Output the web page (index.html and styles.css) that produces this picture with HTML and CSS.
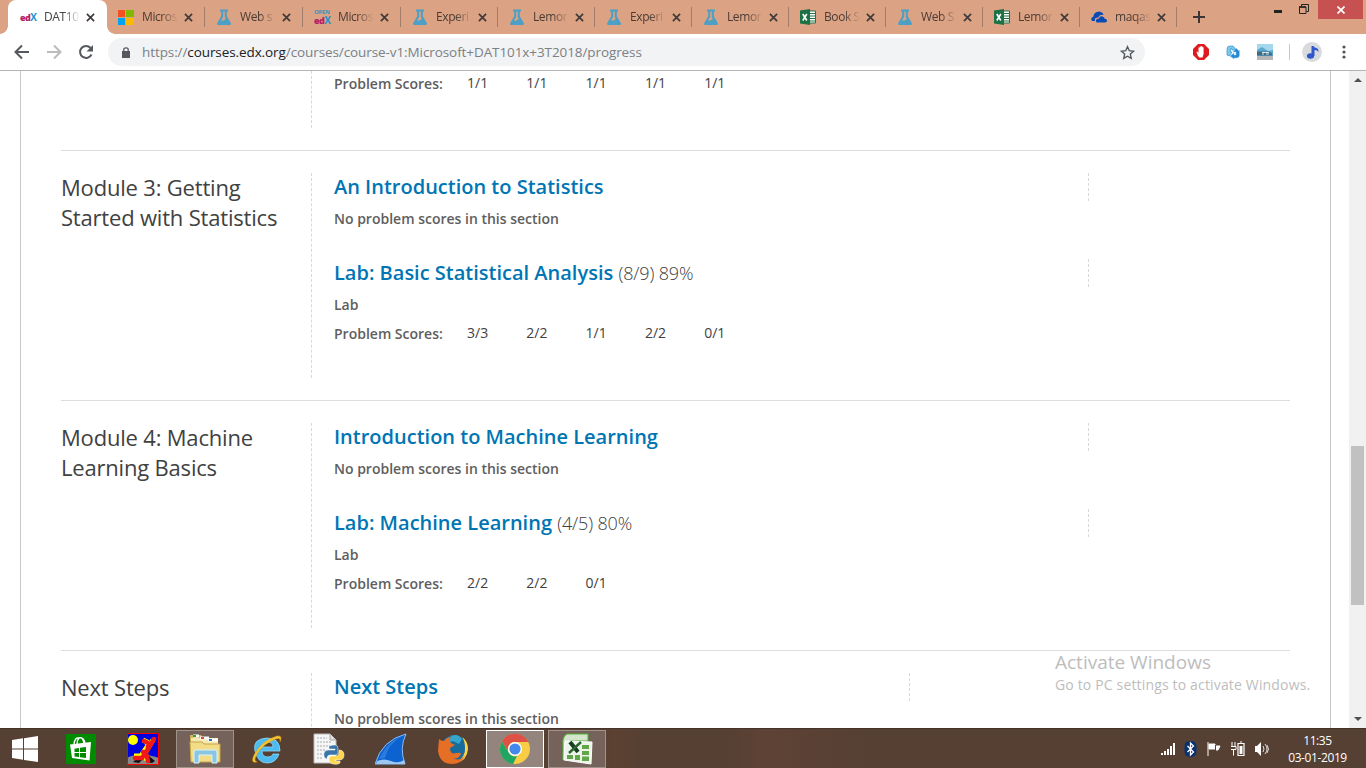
FILE: index.html
```html
<!DOCTYPE html>
<html lang="en">
<head>
<meta charset="utf-8">
<title>DAT101x Progress</title>
<link rel="stylesheet" href="styles.css">
</head>
<body>
<svg class="defs" aria-hidden="true">
  <symbol id="flask" viewBox="0 0 16 16"><path d="M4 .5h8v2h-1.200v4.700l4 6.800q.8 2-1 2H2.200q-1.800 0-1-2l4-6.800V2.500H4zM7.200 2.500V8L4.900 11.500h2.600l2.200-1.500-.9-2V2.500z" fill="#4c9fc5" fill-rule="evenodd"/></symbol>
  <symbol id="excel" viewBox="0 0 16 16"><path d="M8 2h7.500v12H8z" fill="#fff" stroke="#217346"/><path d="M10 4.500h5M10 7h5M10 9.500h5M10 12h5" stroke="#217346" stroke-width="1.200"/><path d="M0 1.500 10 0v16L0 14.500z" fill="#1d7145"/><path d="m2.800 5 4 6.500m0-6.500-4 6.500" stroke="#fff" stroke-width="1.600"/></symbol>
  <symbol id="close" viewBox="0 0 10 10"><path d="m1 1 8 8M9 1 1 9" stroke="#403b3a" stroke-width="1.900"/></symbol>
</svg>

<header class="tabs">
  <div class="tab active"><span class="edx"><b>ed</b><i>X</i></span><span class="label">DAT10</span><svg class="x"><use href="#close"/></svg></div>
  <div class="tab second"><svg class="fav" viewBox="0 0 16 16"><path d="M0 1h7v7H0z" fill="#f35022"/><path d="M8 1h8v7H8z" fill="#7fb900"/><path d="M0 9h7v7H0z" fill="#00a3ee"/><path d="M8 9h8v7H8z" fill="#ffb800"/></svg><span class="label">Micros</span><svg class="x"><use href="#close"/></svg></div>
  <div class="tab wide"><svg class="fav"><use href="#flask"/></svg><span class="label">Web s</span><svg class="x"><use href="#close"/></svg></div>
  <div class="tab wide"><span class="edx open"><small>OPEN</small><span><b>ed</b><i>X</i></span></span><span class="label">Micros</span><svg class="x"><use href="#close"/></svg></div>
  <div class="tab"><svg class="fav"><use href="#flask"/></svg><span class="label">Experi</span><svg class="x"><use href="#close"/></svg></div>
  <div class="tab"><svg class="fav"><use href="#flask"/></svg><span class="label">Lemor</span><svg class="x"><use href="#close"/></svg></div>
  <div class="tab"><svg class="fav"><use href="#flask"/></svg><span class="label">Experi</span><svg class="x"><use href="#close"/></svg></div>
  <div class="tab"><svg class="fav"><use href="#flask"/></svg><span class="label">Lemor</span><svg class="x"><use href="#close"/></svg></div>
  <div class="tab"><svg class="fav"><use href="#excel"/></svg><span class="label">Book S</span><svg class="x"><use href="#close"/></svg></div>
  <div class="tab"><svg class="fav"><use href="#flask"/></svg><span class="label">Web S</span><svg class="x"><use href="#close"/></svg></div>
  <div class="tab"><svg class="fav"><use href="#excel"/></svg><span class="label">Lemor</span><svg class="x"><use href="#close"/></svg></div>
  <div class="tab"><svg class="fav" viewBox="0 0 16 16"><path d="M1 12Q-1 9 2.500 7.500 2.500 4 6 3q3-1.500 5.500 1 1 1 .8 2-4-1-5 2.500Q3 8.500 4 12z" fill="#0a4ab3"/><path d="M5.500 13.500q-2-3.500 2.500-4 1-3 4-1.800 1.500.6 1.600 2 2.400.2 2.400 2 0 1.800-2 1.800z" fill="#0a4ab3"/></svg><span class="label">maqas</span><svg class="x"><use href="#close"/></svg></div>
  <svg class="plus" viewBox="0 0 12 12"><path d="M6 0v12M0 6h12" stroke="#3b3533" stroke-width="2"/></svg>
  <div class="window">
    <svg viewBox="0 0 8 3" width="8" height="3"><path d="M0 0h8v3H0z" fill="#222"/></svg>
    <svg class="restore" viewBox="0 0 10 10" width="10" height="10"><path d="M.5 3h6.500v6.500H.5zM2.500 2.500V.5h7v7H7.500" fill="none" stroke="#222"/><path d="M0 3h7" stroke="#222" stroke-width="1.500"/></svg>
    <span class="shut"><svg viewBox="0 0 8 8" width="8" height="8"><path d="m.5.5 7 7m0-7-7 7" stroke="#fff" stroke-width="1.700"/></svg></span>
  </div>
</header>

<nav class="toolbar">
  <svg class="back" viewBox="0 0 16 16"><path d="M15 8H2M8 1.500 1.500 8 8 14.500" fill="none" stroke="#55585c" stroke-width="2"/></svg>
  <svg class="forward" viewBox="0 0 16 16"><path d="M1 8h13M8 1.500 14.500 8 8 14.500" fill="none" stroke="#b9bbbd" stroke-width="2"/></svg>
  <svg class="reload" viewBox="0 0 16 16"><path d="M13.500 10.500A6 6 0 1 1 12.600 4" fill="none" stroke="#55585c" stroke-width="2"/><path d="M15 1v6.500H8.500z" fill="#55585c"/></svg>
  <div class="address">
    <svg class="lock" viewBox="0 0 8 11"><path d="M0 4h8v7H0z" fill="#55585c"/><path d="M1.800 4V2.500Q1.800.8 4 .8t2.200 1.700V4" fill="none" stroke="#55585c" stroke-width="1.300"/></svg>
    <span class="url">https://<b>courses.edx.org</b>/courses/course-v1:Microsoft+DAT101x+3T2018/progress</span>
    <svg class="star" viewBox="0 0 16 16"><path d="m8 1.800 1.900 4.300 4.600.5-3.500 3.100 1 4.600L8 12l-4 2.300 1-4.600-3.500-3.100 4.600-.5z" fill="none" stroke="#55585c" stroke-width="1.500"/></svg>
  </div>
  <div class="extensions">
    <svg viewBox="0 0 16 16"><path d="M5 0h6l5 5v6l-5 5H5l-5-5V5z" fill="#e01b20"/><path d="M5 12 3.500 8l1-.5L5.500 9V3.500h1.300V2.500h1.300v-.3h1.300v1h1.200V10L9.500 13.500h-3z" fill="#fff"/></svg>
    <svg viewBox="0 0 16 16"><path d="M2 11V5q0-3 3-3h3q2 1 2 4H7q0-2-1.500-1.500V8H7l-2.500 4z" fill="#7cc9ee" stroke="#388fc4" stroke-width=".7"/><path d="M14.500 6v5q0 3-3 3H9v1l-4-3 4-3v2h2V8H8l3-4 4 4" fill="#2786d2" stroke="#91d3f5" stroke-width=".6"/></svg>
    <svg viewBox="0 0 16 16"><path d="M0 0h16v16H0z" fill="#a5d8ed"/><path d="m0 6 5-3 6 4 5-1v6H0z" fill="#58a9cd"/><path d="M0 7.500h12l3 2v2H0z" fill="#426b83"/><path d="M5 8.500h7M5 10h2m2 0h3" stroke="#d6e6ed"/><path d="M0 12h16v4H0z" fill="#b5b6b5"/></svg>
    <i></i>
    <svg class="avatar" viewBox="0 0 20 20"><circle cx="10" cy="10" r="10" fill="#d9dadd"/><path d="M9.500 14V4h2q1 2 3 2 2 .5 2 4-1-2-4-2v6" fill="#3157cc"/><ellipse cx="8.500" cy="14" rx="3.600" ry="2.700" fill="#3157cc"/></svg>
    <svg class="dots" viewBox="0 0 4 14"><circle cx="2" cy="2" r="1.600"/><circle cx="2" cy="7" r="1.600"/><circle cx="2" cy="12" r="1.600"/></svg>
  </div>
</nav>

<main class="viewport">
  <div class="course">
    <section class="chapter partial">
      <h2></h2>
      <div class="lessons"><dl><dt>Problem Scores:</dt><dd>1/1</dd><dd>1/1</dd><dd>1/1</dd><dd>1/1</dd><dd>1/1</dd></dl></div>
    </section>
    <section class="chapter">
      <h2>Module 3: Getting<br>Started with Statistics</h2>
      <div class="lessons">
        <article><h3><a>An Introduction to Statistics</a></h3><p>No problem scores in this section</p></article>
        <article><h3><a>Lab: Basic Statistical Analysis</a> <span>(8/9) 89%</span></h3><p>Lab</p>
          <dl><dt>Problem Scores:</dt><dd>3/3</dd><dd>2/2</dd><dd>1/1</dd><dd>2/2</dd><dd>0/1</dd></dl></article>
      </div>
    </section>
    <section class="chapter">
      <h2>Module 4: Machine<br>Learning Basics</h2>
      <div class="lessons">
        <article><h3><a>Introduction to Machine Learning</a></h3><p>No problem scores in this section</p></article>
        <article><h3><a>Lab: Machine Learning</a> <span>(4/5) 80%</span></h3><p>Lab</p>
          <dl><dt>Problem Scores:</dt><dd>2/2</dd><dd>2/2</dd><dd>0/1</dd></dl></article>
      </div>
    </section>
    <section class="chapter">
      <h2>Next Steps</h2>
      <div class="lessons"><article class="short"><h3><a>Next Steps</a></h3><p>No problem scores in this section</p></article></div>
    </section>
  </div>
  <div class="scrollbar">
    <svg viewBox="0 0 8 4"><path d="M0 4 4 0l4 4z"/></svg>
    <span></span>
    <svg viewBox="0 0 8 4"><path d="m0 0 4 4 4-4z"/></svg>
  </div>
</main>

<aside class="watermark"><div>Activate Windows</div><p>Go to PC settings to activate Windows.</p></aside>

<footer class="taskbar">
  <div class="app start"><svg viewBox="0 0 26 26" width="26" height="26"><path d="M0 4 11 2.300V12.500H0zM12 2.200 26 0v12.500H12zM0 13.500h11v10.200L0 22zM12 13.500h14V26l-14-2.100z" fill="#fff"/></svg></div>
  <div class="app store"><svg viewBox="0 0 30 30" width="30" height="30"><path d="M0 0h30v30H0z" fill="#008a00"/><path d="m4 10.500 21-2.500-1.500 18.500L6 24z" fill="#fff"/><path d="M8 10q1-7 5-6 4-2 5 6m-7 0q0-4 2-6 5-1 6 5" fill="none" stroke="#fff" stroke-width="1.400"/><path d="M8.500 14.800 13 14v4H8.500zm5.500-1 6-.8v5h-6zM8.500 19H13v4l-4.500-.5zm5.500 0h6v5l-6-.8z" fill="#008a00"/></svg></div>
  <div class="app"><svg viewBox="0 0 32 32" width="32" height="32"><path d="M0 0h32v32H0z" fill="#0000e0"/><path d="M0 25q12-7 32 0v7H0z" fill="#888"/><path d="m6 29 8-7 3 3-5 5zm13 0 3-6 6 5-3 2z" fill="#111"/><circle cx="6" cy="7" r="5" fill="#ff0"/><path d="m16 7 4 2 1 6 5-8m-6 7-6 9H7m8-4 5 8" fill="none" stroke="#ff0" stroke-width="5"/><path d="m17 8 4 2v6l6-10m-6 10-6 9H8m8-6 3 1 2 8" fill="none" stroke="#f31818" stroke-width="4.500" stroke-linecap="round" stroke-linejoin="round"/><path d="M.5.500h31v31H.5z" fill="none" stroke="red"/></svg></div>
  <div class="app open-app"><svg viewBox="0 0 32 32" width="32" height="32"><path d="M1 2h11l2 3h13l1 23H2z" fill="#d7b75b"/><path d="M2 5h27v20H2z" fill="#f4e8ae"/><path d="M4 3h6M11 5h9M19 7h10" stroke="#fff" stroke-width="3"/><path d="M4 3h3" stroke="#27a63b" stroke-width="2"/><path d="M12 5h3" stroke="#dc4939" stroke-width="2"/><path d="M20 7h3" stroke="#2676c5" stroke-width="2"/><path d="M1 9h12l2 2h16v18H2z" fill="#f2dc87" stroke="#c8a347"/><path d="M5 30V19q0-2 2-2h19q2 0 2 2v11h-5v-8H10v8z" fill="#8ac6e1" stroke="#d7f4fd"/></svg></div>
  <div class="app"><svg viewBox="0 0 32 32" width="32" height="32"><path d="M29 18H11q0 6 6 6 4 0 5-3h6q-3 9-12 9T4 18 16 5q13 0 13 13M11 14h11q0-5-5.500-5T11 14" fill="#4dbbf0" stroke="#8bd9fb" stroke-width=".8" fill-rule="evenodd"/><path d="M6 29Q-1 31 3 22 11 7 26 3q6-1 3 6 1-5-4-3Q13 10 6 21q-4 7 0 8" fill="#f6c52f" stroke="#d89b16" stroke-width=".5"/></svg></div>
  <div class="app"><svg viewBox="0 0 32 32" width="32" height="32"><path d="M1 1h16l6 6v23H1z" fill="#f6f6f6" stroke="#bbb"/><path d="M17 1v6h6" fill="#ddd" stroke="#aaa"/><path d="M4 5h10M4 9h15M4 13h13M4 17h8M4 21h6M4 25h6" stroke="#aaa" stroke-dasharray="2 1"/><path d="M16 13q9-3 9 2v5q0 2-3 2h-5q-3 0-3 4-4-1-3-6 1-3 4-3h7v-1h-6z" fill="#3977aa" stroke="#fff" stroke-width=".5"/><path d="M26 17q5 0 5 5 0 5-5 5h-4v1h5v2q-2 2-7 1-4-1-4-4v-2q0-2 3-2h4q3 0 3-4z" fill="#ffd64c" stroke="#fff" stroke-width=".5"/></svg></div>
  <div class="app"><svg viewBox="0 0 32 32" width="32" height="32"><path d="M0 31Q7 7 31 1q-7 14-1 30z" fill="#0c62cf" stroke="#8bbcf3"/><path d="M2 28q7-3 14 0t13-1l1 4H1z" fill="#9bc7f2"/><path d="M4 26Q12 9 27 3q-14 8-17 22z" fill="#2b7ce0"/></svg></div>
  <div class="app"><svg viewBox="0 0 32 32" width="32" height="32"><circle cx="17" cy="15" r="13" fill="#176c9d"/><path d="M14 3q7-3 11 3l-3 5-6-3-5 2z" fill="#36a5cb"/><path d="M25 4q6 4 6 12-1 12-12 14 10-7 9-15 0-7-3-11" fill="#ffd34a"/><path d="M2 6q2 2 5 2 3-4 7-4-3 3 0 6l4 2-5 3q0 7 6 5 5-1 5 1-3 6-9 4 8 4 13-3-3 9-13 9Q3 31 1 18z" fill="#e66e25"/></svg></div>
  <div class="app open-app chrome"><svg viewBox="0 0 32 32" width="32" height="32"><circle cx="16" cy="16" r="15" fill="#f8cc45"/><path d="M3 8.500A15 15 0 0 1 29.500 9H16a7 7 0 0 0-6.500 10z" fill="#df5146"/><path d="M3 8.500 10 20a7 7 0 0 0 8 3l-4 8A15 15 0 0 1 3 8.500" fill="#21a565"/><circle cx="16" cy="16" r="7" fill="#fff"/><circle cx="16" cy="16" r="5.600" fill="#4388ed"/></svg></div>
  <div class="app open-app"><svg viewBox="0 0 32 32" width="32" height="32"><path d="M6 1h21v7H9v18l-7 1V7q1-5 4-6z" fill="#d4e4cd" stroke="#4fb52f"/><path d="m4 8 27 1-1 22-27-4z" fill="#edf5e9" stroke="#fff"/><path d="M21 12h7v4h-7zm0 6h7v4h-7zM6 22h6v4H6zm8 0h5v5h-5zm7 1.500h7V28h-7z" fill="#62a64b"/><path d="m9 9 8 10" stroke="#173e20" stroke-width="4"/><path d="M20 9 8 20" stroke="#2c652f" stroke-width="2.500"/></svg></div>
  <div class="tray">
    <svg viewBox="0 0 16 12"><path d="M1 10h2v2H1zm3-2h2v4H4zm3-2h2v6H7zm3-3h2v9h-2zm3-3h2v12h-2z" fill="#fff"/></svg>
    <svg class="bt" viewBox="0 0 12 16"><rect width="12" height="16" rx="5" fill="#0a326d"/><path d="m3 5 6 6-3 3V2l3 3-6 6" fill="none" stroke="#fff" stroke-width="1.300"/></svg>
    <svg class="flag" viewBox="0 0 16 16"><path d="M2 1v14M3 3h6v5H3zM10 5h4l-2 4h-2z" fill="#fff" stroke="#fff"/><path d="M9.500 4v5" stroke="#554035"/></svg>
    <svg class="battery" viewBox="0 0 16 16"><path d="M2 1v4m3-4v4M1 5.500h5v3H1m2.500 0v6" stroke="#fff" fill="none"/><path d="M8 2.500h6v12H8zM10 1h2" fill="none" stroke="#fff" stroke-width="1.200"/><path d="M9.500 5h3v8h-3z" fill="#fff"/></svg>
    <svg class="sound" viewBox="0 0 16 16"><path d="M1 5h2l4-4v14l-4-4H1z" fill="#fff"/><path d="M9 5q2 3 0 6m2-8q4 5 0 10m2-9q3 4 0 8" fill="none" stroke="#ddd"/></svg>
    <div class="clock"><div>11:35</div><div class="date">03-01-2019</div></div>
  </div>
</footer>
</body>
</html>
```

FILE: styles.css
```css
* { box-sizing: border-box; }
html, body { margin: 0; width: 1366px; height: 768px; overflow: hidden; }
body { display: flex; flex-direction: column; background: #fff; font-family: "Open Sans", "Noto Sans", sans-serif; }
h2, h3, p, dl, dd { margin: 0; }
svg { display: block; flex: none; }
.defs { position: absolute; width: 0; height: 0; }

.tabs { display: flex; flex: none; height: 34px; padding-left: 8px; background: #dba283; }
.tab { display: flex; align-items: center; flex: none; width: 97px; padding-left: 12px; position: relative; font-size: 12px; color: #4b3c36; }
.tab.wide { width: 98px; }
.tab.second { padding-left: 11px; }
.tab:not(.active)::after { content: ""; position: absolute; right: -1px; top: 7px; width: 1px; height: 20px; background: #a27d6b; }
.tab.active { width: 99px; background: #fff; border-radius: 8px 8px 0 0; color: #444; }
.tab.active::before, .tab.active::after { content: ""; position: absolute; bottom: 0; width: 8px; height: 8px; }
.tab.active::before { left: -8px; background: radial-gradient(circle at 0 0, transparent 7.5px, #fff 8px); }
.tab.active::after { right: -8px; background: radial-gradient(circle at 100% 0, transparent 7.5px, #fff 8px); }
.fav { width: 16px; height: 16px; }
.label { width: 36px; margin-left: 8px; white-space: nowrap; letter-spacing: -.4px; line-height: 20px; -webkit-mask-image: linear-gradient(90deg, #000 55%, transparent); mask-image: linear-gradient(90deg, #000 55%, transparent); }
.x { width: 9px; height: 9px; margin-left: 6px; }
.edx { width: 16px; font: 700 9px/10px "Open Sans", sans-serif; letter-spacing: -.5px; white-space: nowrap; }
.edx b { color: #b52167; }
.edx i { color: #1d92d2; font-size: 10px; font-style: normal; }
.open { display: grid; grid-template-rows: 7px 9px; }
.open small { color: #3894c2; font-size: 6px; line-height: 7px; letter-spacing: -.3px; }
.open > span { line-height: 9px; }
.plus { width: 12px; height: 12px; margin: 11px 0 0 17px; }
.window { display: flex; margin-left: auto; padding-right: 3px; }
.window > svg { margin: 10px 17px 0 0; }
.window .restore { margin: 4px 9px 0 0; }
.shut { display: grid; place-items: center; width: 45px; height: 19px; background: #c75050; }

.toolbar { display: flex; flex: none; align-items: center; height: 37px; border-bottom: 1px solid #b4b4b4; padding-left: 14px; }
.toolbar > svg { width: 16px; height: 16px; margin-right: 16px; }
.toolbar .reload { margin-right: 14px; }
.address { display: flex; align-items: center; width: 1037px; height: 28px; border-radius: 14px; background: #f1f3f4; padding: 0 10px 0 14px; }
.lock { width: 8px; height: 11px; }
.url { margin-left: 12px; color: #7c8084; font-size: 13.5px; letter-spacing: -.09px; white-space: nowrap; }
.url b { font-weight: 400; color: #202124; }
.star { width: 15px; height: 15px; margin-left: auto; }
.extensions { display: flex; align-items: center; margin-left: 48px; }
.extensions svg { width: 16px; height: 16px; margin-right: 16px; }
.extensions i { width: 1px; height: 16px; background: #c8c8c8; margin-right: 12px; }
.extensions .avatar { width: 20px; height: 20px; margin-right: 20px; }
.extensions .dots { width: 4px; height: 14px; margin: 0; fill: #505357; }

.viewport { flex: none; height: 657px; display: flex; justify-content: space-between; overflow: hidden; padding-left: 20px; }
.course { width: 1311px; padding: 0 40px; border: solid #c8c8c8; border-width: 0 1px; }
.chapter { display: grid; grid-template-columns: 250px 1fr; height: 250px; padding: 22px 0; border-top: 1px solid #ddd; }
.chapter.partial { height: 79px; padding-top: 0; border: 0; }
h2 { margin-top: -1px; color: #414141; font-size: 22px; line-height: 30px; font-weight: 400; letter-spacing: -.19px; white-space: nowrap; }
.lessons { border-left: 1px dashed #d8d8d8; padding-left: 22px; }
article { height: 86px; }
h3 { width: 755px; height: 28px; border-right: 1px dashed #d8d8d8; font-size: 20px; line-height: 28px; font-weight: 400; color: #414141; white-space: nowrap; }
h3 a { color: #0075b4; font-weight: 600; }
h3 span { font-weight: 300; font-size: 18px; letter-spacing: -.15px; }
.short h3 { width: 576px; }
article p { margin-top: 7px; font-size: 14px; line-height: 22px; font-weight: 600; color: #5e5e5e; }
dl { display: flex; margin-top: 7px; font-size: 14px; line-height: 22px; color: #414141; }
dt { width: 133px; font-weight: 600; color: #5e5e5e; }
dd { width: 59.300px; margin-top: -1px; }
.partial dl { margin-top: 2px; }
.scrollbar { display: flex; flex-direction: column; align-items: center; width: 17px; padding: 7px 0; background: #f1f1f1; }
.scrollbar svg { width: 8px; height: 4px; fill: #505050; }
.scrollbar span { width: 13px; height: 159px; margin-top: 364px; background: #c1c1c1; }
.scrollbar svg:last-child { margin-top: auto; }

.watermark { position: absolute; left: 1055px; top: 650px; color: #bdbdbd; white-space: nowrap; font-size: 19px; line-height: 25px; }
.watermark p { font-size: 14px; line-height: 20px; letter-spacing: .16px; }

.taskbar { display: flex; flex: none; height: 40px; padding-top: 1px; border-top: 1px solid #453228; background: linear-gradient(90deg, transparent 600px, #68432f66 615px, transparent 645px, transparent 725px, #6d453966 765px, transparent 870px), #554033; }
.app { display: grid; place-items: center; width: 58px; height: 38px; margin-right: 4px; }
.start { width: 50px; margin: 0; }
.store { width: 62px; margin-right: 2px; }
.open-app { border: 1px solid #a0938c; background: #75625b; }
.chrome { border-color: #fff; background: #93857e; }
.tray { display: flex; align-items: center; margin-left: auto; padding-right: 18px; }
.tray > svg { width: 16px; height: 16px; margin-right: 8px; }
.tray > .bt { width: 13px; margin-right: 9px; }
.clock { margin-left: 9px; width: 61px; color: #fff; font-size: 12px; line-height: 17px; text-align: center; white-space: nowrap; letter-spacing: -.4px; }
```
